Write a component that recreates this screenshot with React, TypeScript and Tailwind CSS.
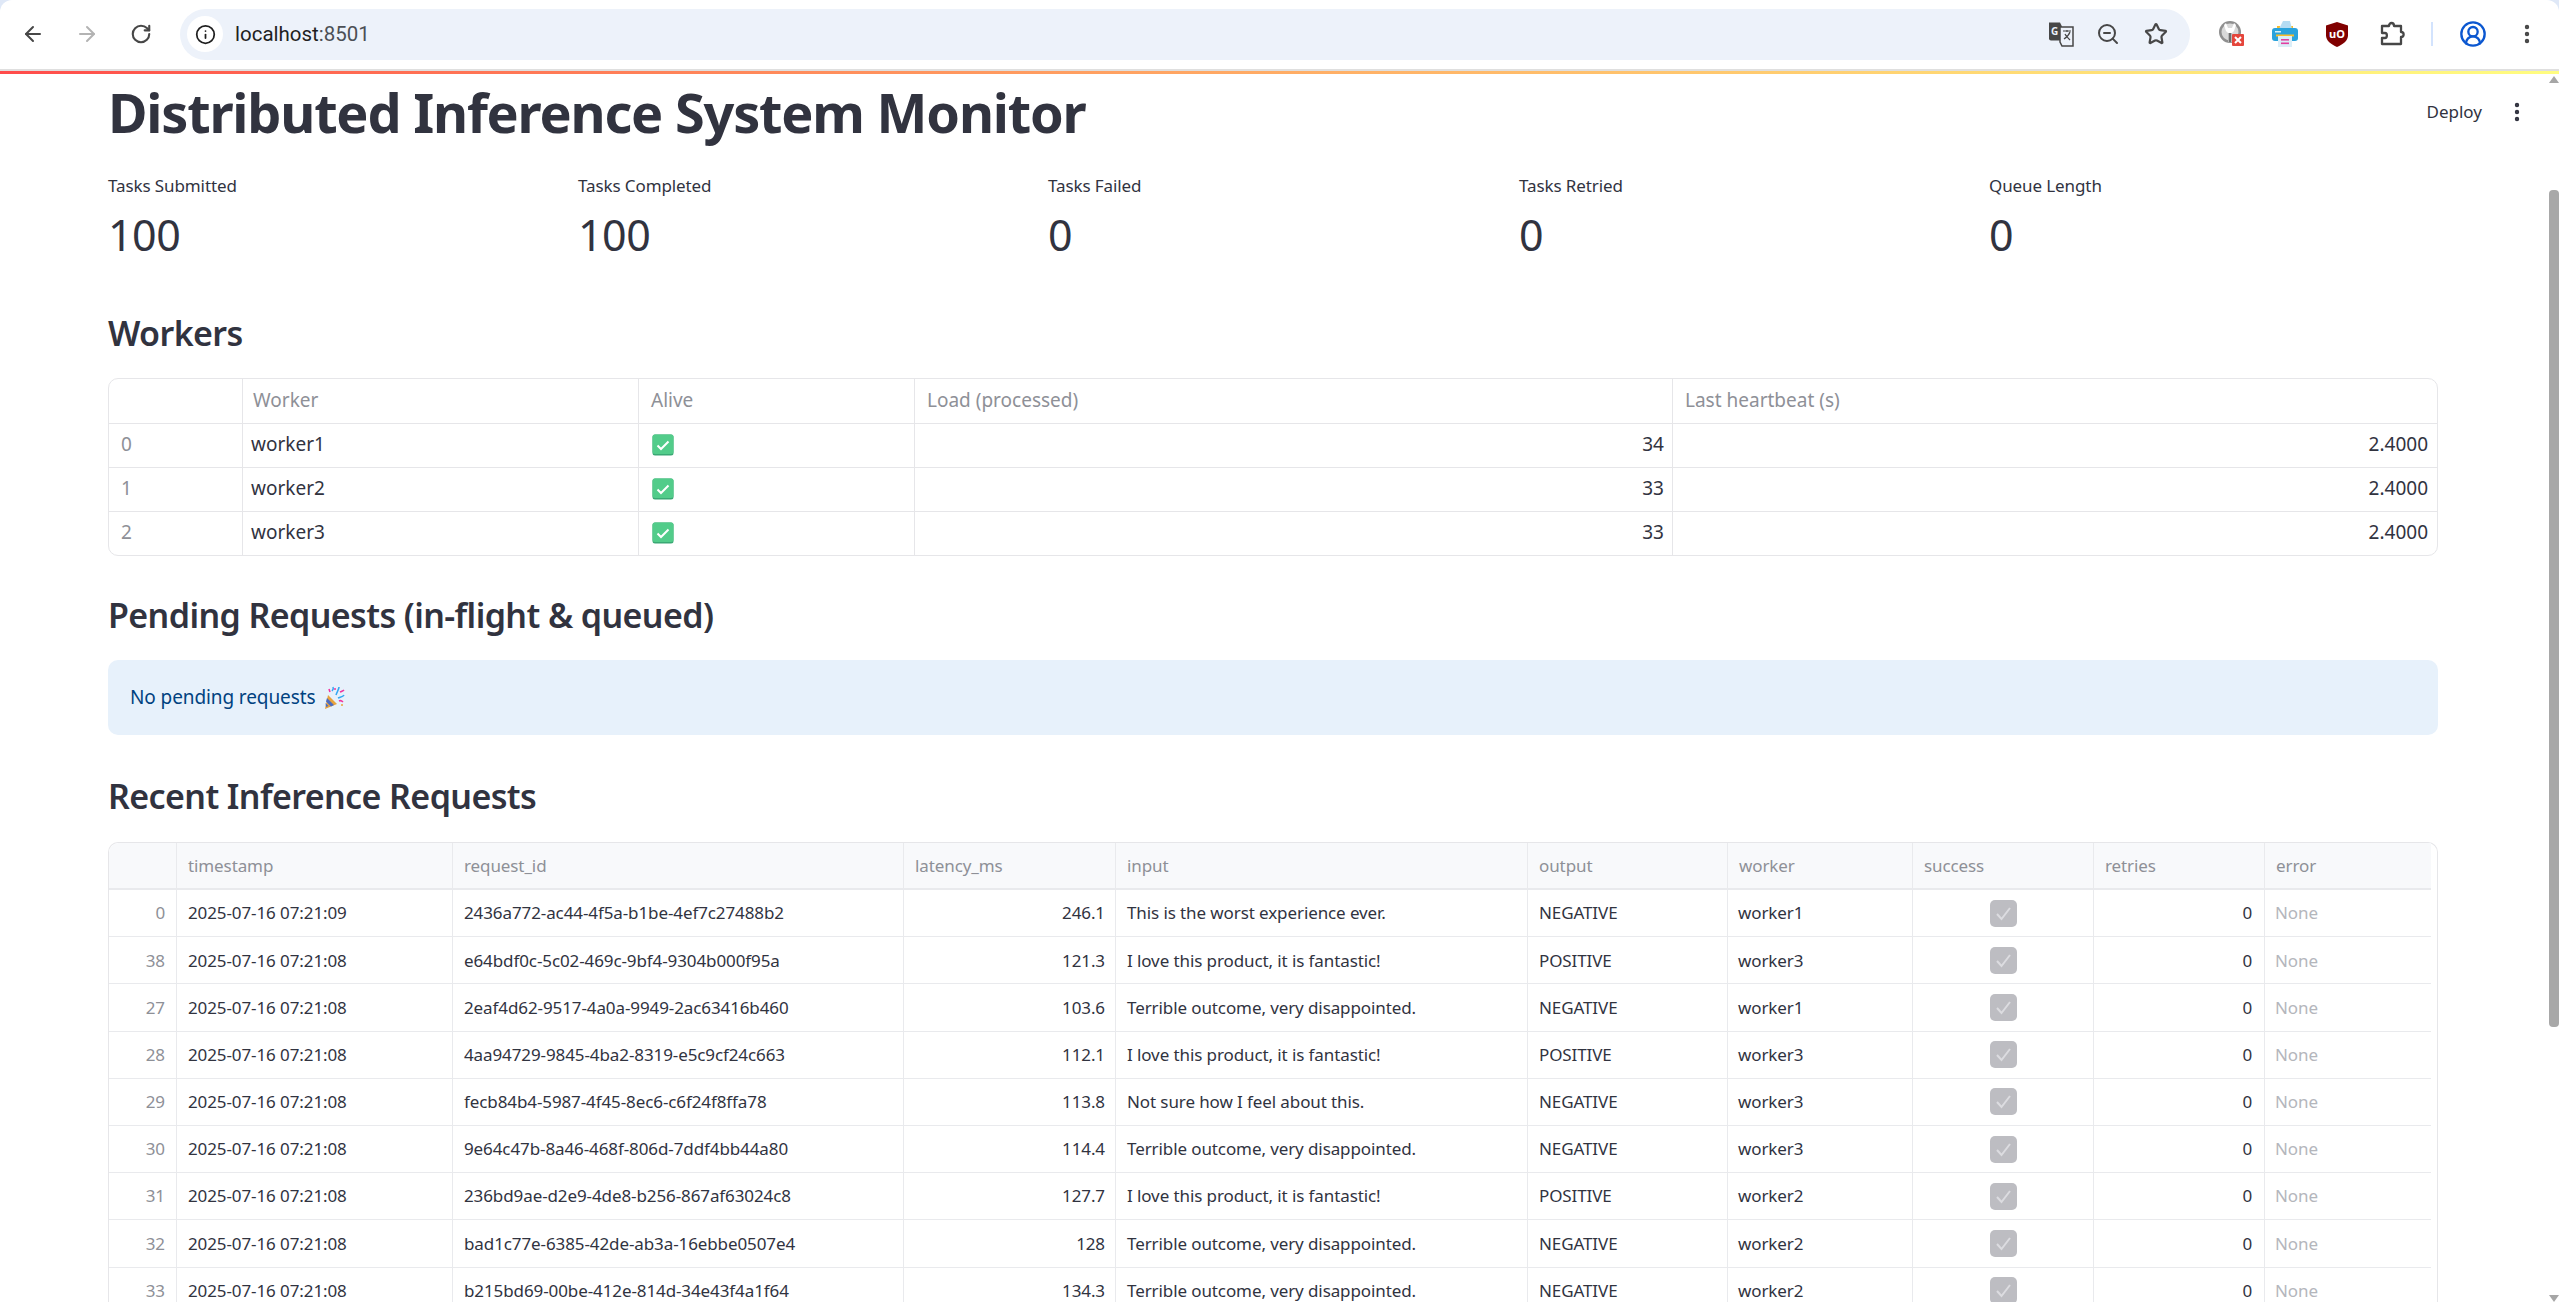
import {
  ArrowLeft,
  ArrowRight,
  CircleUserRound,
  EllipsisVertical,
  Info,
  RotateCw,
  Star,
  ZoomOut,
} from "lucide-react";

const metrics = [
  { label: "Tasks Submitted", value: "100" },
  { label: "Tasks Completed", value: "100" },
  { label: "Tasks Failed", value: "0" },
  { label: "Tasks Retried", value: "0" },
  { label: "Queue Length", value: "0" },
];

const workers = [
  { id: 0, name: "worker1", load: 34 },
  { id: 1, name: "worker2", load: 33 },
  { id: 2, name: "worker3", load: 33 },
];

const requests = [
  { i: 0, ts: "2025-07-16 07:21:09", id: "2436a772-ac44-4f5a-b1be-4ef7c27488b2", ms: "246.1", input: "This is the worst experience ever.", out: "NEGATIVE", w: "worker1" },
  { i: 38, ts: "2025-07-16 07:21:08", id: "e64bdf0c-5c02-469c-9bf4-9304b000f95a", ms: "121.3", input: "I love this product, it is fantastic!", out: "POSITIVE", w: "worker3" },
  { i: 27, ts: "2025-07-16 07:21:08", id: "2eaf4d62-9517-4a0a-9949-2ac63416b460", ms: "103.6", input: "Terrible outcome, very disappointed.", out: "NEGATIVE", w: "worker1" },
  { i: 28, ts: "2025-07-16 07:21:08", id: "4aa94729-9845-4ba2-8319-e5c9cf24c663", ms: "112.1", input: "I love this product, it is fantastic!", out: "POSITIVE", w: "worker3" },
  { i: 29, ts: "2025-07-16 07:21:08", id: "fecb84b4-5987-4f45-8ec6-c6f24f8ffa78", ms: "113.8", input: "Not sure how I feel about this.", out: "NEGATIVE", w: "worker3" },
  { i: 30, ts: "2025-07-16 07:21:08", id: "9e64c47b-8a46-468f-806d-7ddf4bb44a80", ms: "114.4", input: "Terrible outcome, very disappointed.", out: "NEGATIVE", w: "worker3" },
  { i: 31, ts: "2025-07-16 07:21:08", id: "236bd9ae-d2e9-4de8-b256-867af63024c8", ms: "127.7", input: "I love this product, it is fantastic!", out: "POSITIVE", w: "worker2" },
  { i: 32, ts: "2025-07-16 07:21:08", id: "bad1c77e-6385-42de-ab3a-16ebbe0507e4", ms: "128", input: "Terrible outcome, very disappointed.", out: "NEGATIVE", w: "worker2" },
  { i: 33, ts: "2025-07-16 07:21:08", id: "b215bd69-00be-412e-814d-34e43f4a1f64", ms: "134.3", input: "Terrible outcome, very disappointed.", out: "NEGATIVE", w: "worker2" },
];

const headers = ["timestamp", "request_id", "latency_ms", "input", "output", "worker", "success", "retries", "error"];

const workerCols = "grid grid-cols-[134px_396px_276px_758px_1fr]";
const requestCols = "grid grid-cols-[68px_276px_451px_212px_412px_200px_185px_181px_171px_164px]";

const WrenchBadge = () => (
  <svg width="28" height="28" viewBox="0 0 28 28">
    <circle cx="12" cy="12" r="11" fill="#8f8f8f" />
    <circle cx="12" cy="12" r="8.5" fill="#d9d9d9" />
    <path d="M8 3l2 5h4l2-5 2 2-2 6-2 2v9h-4v-9L8 11 6 5z" fill="#fff" />
    <path d="M10.5 13h3v9h-3z" fill="#6f6f6f" />
    <rect x="14" y="14" width="12" height="12" rx="1" fill="#e5463c" />
    <path d="M17 17l6 6M23 17l-6 6" stroke="#fff" strokeWidth="2" />
  </svg>
);

const PrinterIcon = () => (
  <svg width="28" height="30" viewBox="0 0 28 30">
    <path d="M6 10V7h3v3zM22 10V7h-3v3z" fill="#f8bd2c" />
    <path d="M8 10l4-8h7l2 8z" fill="#b5dcf3" />
    <rect x="1" y="9" width="26" height="13" rx="3" fill="#2aa3dc" />
    <rect x="4" y="12" width="6" height="1.5" fill="#d5f0fb" />
    <rect x="5" y="15.5" width="18" height="2" fill="#f8bd2c" />
    <rect x="7" y="17" width="14" height="11" fill="#dbeef8" />
    <rect x="10" y="20" width="8" height="1.6" fill="#e33fa0" />
    <rect x="10" y="23.5" width="8" height="1.6" fill="#e33fa0" />
  </svg>
);

const UBlockIcon = () => (
  <svg width="22" height="25" viewBox="0 0 22 25">
    <path d="M11 0l11 3.5v10c0 5-5 9-11 11.500-6-2.500-11-6.500-11-11.500v-10z" fill="#800000" />
    <text x="11" y="15.500" textAnchor="middle" fontSize="11" fontWeight="700" fill="#fff" fontFamily="Noto Sans, sans-serif">uO</text>
  </svg>
);

const PuzzleIcon = () => (
  <svg width="26" height="26" viewBox="0 0 26 26" fill="none" stroke="#474747" strokeWidth="2.300" strokeLinejoin="round">
    <path d="M2 5h7c0-4 5-4 5 0h7v6c3.500 0 3.500 5 0 5v7H2v-6h3c2.500 0 2.500-5 0-5H2z" />
  </svg>
);

const TranslateIcon = () => (
  <svg width="26" height="26" viewBox="0 0 26 26">
    <path d="M1 1.500h11l2 4v14H3a2 2 0 0 1-2-2z" fill="#474747" />
    <text x="6.500" y="13.500" textAnchor="middle" fontSize="10" fontWeight="700" fill="#edf2fa" fontFamily="Noto Sans, sans-serif">G</text>
    <path d="M12 6h13v19H14l-2-4z" fill="#edf2fa" stroke="#474747" strokeWidth="1.500" />
    <path d="M15 10h8M19 9v2M16 18c3-2 5-4 6-7M17 13c1 2 3 4 5 6" fill="none" stroke="#474747" strokeWidth="1.200" />
  </svg>
);

const GreenCheck = () => (
  <svg width="22" height="22" viewBox="0 0 22 22">
    <rect x="0.500" y="0.500" width="21" height="21" rx="2.500" fill="#3aa874" />
    <rect x="0.500" y="0.500" width="21" height="19.500" rx="2.500" fill="#52cc8a" />
    <path d="M5.500 11.500l3.500 3.500 7.500-7.500" fill="none" stroke="#fff" strokeWidth="2" />
  </svg>
);

const GrayCheck = () => (
  <span className="flex h-[27px] w-[27px] items-center justify-center rounded-[5px] bg-[#bdbdc2]">
    <svg width="19" height="19" viewBox="0 0 19 19">
      <path d="M3 10l4.500 5L16 4" fill="none" stroke="#dcdce0" strokeWidth="2" />
    </svg>
  </span>
);

const Popper = () => (
  <svg width="22" height="24" viewBox="0 0 22 24" className="ml-[8px]">
    <path d="M5 9l9 9-12 5z" fill="#e8a33d" />
    <path d="M4 12l7 7-3 1.500-5-5zM2.500 17l3 3-2.500 1z" fill="#4b6cc1" />
    <path d="M9 5c1-1 2-2 1-4M13 9c1-3 3-6 3-8M15 12c2-1 5-1 6-3" fill="none" stroke="#35a7f2" strokeWidth="1.600" />
    <path d="M6 3l1 3M17 6c2-1 3-1 4-2M16 15c2-1 3 0 4 1" fill="none" stroke="#f0359f" strokeWidth="1.600" />
    <circle cx="12" cy="3" r="1" fill="#f0359f" />
    <circle cx="19" cy="19" r="1" fill="#e8a33d" />
  </svg>
);

const BrowserBar = () => (
  <div className="bg-[#dfe8f7]">
    <div className="flex h-[69px] items-center rounded-t-[12px] bg-white pb-[1px]">
      <ArrowLeft size={24} color="#474747" strokeWidth={2} className="ml-[21px]" />
      <ArrowRight size={24} color="#b3b3b3" strokeWidth={2} className="ml-[30px]" />
      <RotateCw size={22} color="#474747" strokeWidth={2.300} className="ml-[31px]" />
      <div className="ml-[28px] flex h-[51px] w-[2010px] items-center rounded-full bg-[#edf2fa] pl-[7px] pr-[22px]">
        <span className="flex h-[36px] w-[36px] items-center justify-center rounded-full bg-white">
          <Info size={21} color="#1f1f1f" strokeWidth={2} />
        </span>
        <span className="ml-[12px] flex-1 font-['Roboto',sans-serif] text-[20.5px] text-[#1f1f1f]">
          localhost<span className="text-[#4b4f55]">:8501</span>
        </span>
        <TranslateIcon />
        <ZoomOut size={24} color="#474747" strokeWidth={2} className="ml-[22px]" />
        <Star size={24} color="#474747" strokeWidth={2.200} className="ml-[24px]" />
      </div>
      <span className="ml-[28px]"><WrenchBadge /></span>
      <span className="ml-[25px]"><PrinterIcon /></span>
      <span className="ml-[27px]"><UBlockIcon /></span>
      <span className="ml-[32px]"><PuzzleIcon /></span>
      <span className="ml-[25px] h-[24px] w-[2px] bg-[#d3e3fd]" />
      <CircleUserRound size={28} color="#0b57d0" strokeWidth={2} className="ml-[26px]" />
      <EllipsisVertical size={24} color="#474747" strokeWidth={2.400} className="ml-[28px]" />
    </div>
    <div className="h-[2px] bg-[#dfdfdf]" />
    <div className="h-[3px] bg-gradient-to-r from-[#ff4b4b] to-[#fffd80]" />
  </div>
);

const Metric = ({ label, value }: { label: string; value: string }) => (
  <div>
    <div className="flex h-[28px] items-center text-[17px] tracking-[-0.1px] text-[#31333f]">{label}</div>
    <div className="mt-[6px] flex h-[60px] items-center pb-[2px] text-[43px] tracking-[-0.5px] text-[#31333f]">{value}</div>
  </div>
);

const SectionTitle = ({ children, className }: { children: string; className: string }) => (
  <h2 className={`flex h-[48px] items-center text-[34px] font-semibold tracking-[-0.6px] text-[#31333f] ${className}`}>{children}</h2>
);

const WorkersTable = () => (
  <div className="mt-[22px] overflow-hidden rounded-[10px] border border-[#e6e6e9] text-[19px]">
    <div className={`${workerCols} h-[44px] items-stretch text-[#8e9097]`}>
      <div className="border-r border-[#e6e6e9]" />
      <div className="flex items-center border-r border-[#e6e6e9] pb-[2px] pl-[10px]">Worker</div>
      <div className="flex items-center border-r border-[#e6e6e9] pb-[2px] pl-[12px]">Alive</div>
      <div className="flex items-center border-r border-[#e6e6e9] pb-[2px] pl-[12px]">Load (processed)</div>
      <div className="flex items-center pb-[2px] pl-[12px]">Last heartbeat (s)</div>
    </div>
    {workers.map((w) => (
      <div key={w.id} className={`${workerCols} h-[44px] border-t border-[#e6e6e9] text-[#31333f]`}>
        <div className="flex items-center border-r border-[#e6e6e9] pb-[2px] pl-[12px] text-[#8e9097]">{w.id}</div>
        <div className="flex items-center border-r border-[#e6e6e9] pb-[2px] pl-[8px]">{w.name}</div>
        <div className="flex items-center border-r border-[#e6e6e9] pb-[2px] pl-[13px]"><GreenCheck /></div>
        <div className="flex items-center justify-end border-r border-[#e6e6e9] pb-[2px] pr-[8px]">{w.load}</div>
        <div className="flex items-center justify-end pb-[2px] pr-[9px]">2.4000</div>
      </div>
    ))}
  </div>
);

const RequestsTable = () => (
  <div className="mt-[22px] h-[500px] rounded-t-[10px] border border-b-0 border-[#e6e6e9] pr-[6px] text-[17px] tracking-[-0.1px]">
    <div className={`${requestCols} h-[47px] rounded-tl-[10px] border-b-2 border-[#e9eaed] bg-[#f8f9fb] text-[#8e9097]`}>
      <div className="border-r border-[#e9eaed]" />
      {headers.map((h, i) => (
        <div key={h} className={`flex items-center pl-[11px] ${i < headers.length - 1 ? "border-r border-[#e9eaed]" : ""}`}>{h}</div>
      ))}
    </div>
    {requests.map((r) => (
      <div key={r.id} className={`${requestCols} h-[47.2px] border-b border-[#e9eaed] text-[#31333f]`}>
        <div className="flex items-center justify-end border-r border-[#e9eaed] pr-[11px] text-[#8e9097]">{r.i}</div>
        <div className="flex items-center border-r border-[#e9eaed] pl-[11px]">{r.ts}</div>
        <div className="flex items-center border-r border-[#e9eaed] pl-[11px]">{r.id}</div>
        <div className="flex items-center justify-end border-r border-[#e9eaed] pr-[10px]">{r.ms}</div>
        <div className="flex items-center border-r border-[#e9eaed] pl-[11px]">{r.input}</div>
        <div className="flex items-center border-r border-[#e9eaed] pl-[11px]">{r.out}</div>
        <div className="flex items-center border-r border-[#e9eaed] pl-[10px]">{r.w}</div>
        <div className="flex items-center justify-center border-r border-[#e9eaed]"><GrayCheck /></div>
        <div className="flex items-center justify-end border-r border-[#e9eaed] pr-[12px]">0</div>
        <div className="flex items-center pl-[10px] text-[#b4b6bc]">None</div>
      </div>
    ))}
  </div>
);

const Scrollbar = () => (
  <div className="flex w-[11px] flex-col items-center pt-[2px]">
    <span className="h-0 w-0 border-x-[5px] border-b-[7px] border-x-transparent border-b-[#a6a6a6]" />
    <span className="mt-[107px] h-[837px] w-[10px] rounded-[4px] bg-[#a8a8a8]" />
    <span className="mt-auto h-0 w-0 border-x-[5px] border-t-[7px] border-x-transparent border-t-[#a6a6a6]" />
  </div>
);

export default function App() {
  return (
    <div className="flex h-screen flex-col overflow-hidden bg-white font-['Noto_Sans',sans-serif]">
      <BrowserBar />
      <div className="flex min-h-0 flex-1">
        <main className="relative min-w-0 flex-1 overflow-hidden pl-[108px] pr-[110px]">
          <div className="absolute right-[19px] top-[25px] flex items-center gap-[23px] text-[17px] text-[#31333f]">
            <span>Deploy</span>
            <EllipsisVertical size={24} color="#31333f" strokeWidth={2.400} />
          </div>
          <h1 className="flex h-[76px] items-center text-[54px] font-bold tracking-[-1.2px] text-[#31333f]">Distributed Inference System Monitor</h1>
          <div className="mt-[22px] grid grid-cols-[470px_470px_471px_470px_1fr]">
            {metrics.map((m) => (
              <Metric key={m.label} label={m.label} value={m.value} />
            ))}
          </div>
          <SectionTitle className="mt-[42px] pt-[2px]">Workers</SectionTitle>
          <WorkersTable />
          <SectionTitle className="mt-[35px]">Pending Requests (in-flight &amp; queued)</SectionTitle>
          <div className="mt-[21px] flex h-[75px] items-center rounded-[10px] bg-[#e7f1fb] pl-[22px] text-[19px] tracking-[-0.1px] text-[#004280]">
            No pending requests
            <Popper />
          </div>
          <SectionTitle className="mt-[37px]">Recent Inference Requests</SectionTitle>
          <RequestsTable />
        </main>
        <Scrollbar />
      </div>
    </div>
  );
}
